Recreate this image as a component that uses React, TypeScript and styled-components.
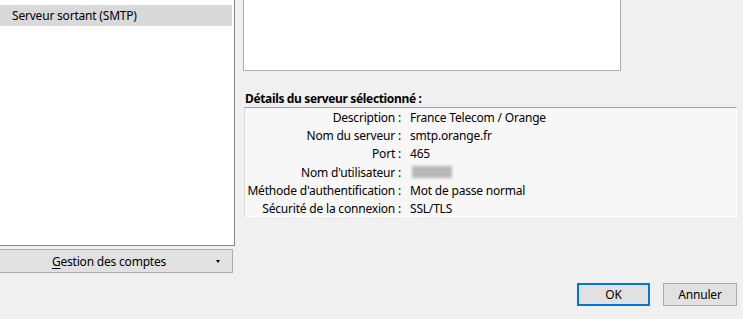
import React from "react";
import styled, { createGlobalStyle } from "styled-components";

const Global = createGlobalStyle`
  html, body { margin: 0; padding: 0; background: #f0f0f0; }
  body { font-family: "Noto Sans", "Open Sans", sans-serif; font-size: 12px; color: #000; letter-spacing: -0.2px; }
`;

const Window = styled.div`
  width: 743px;
  height: 319px;
  background: #f0f0f0;
  overflow: hidden;
  display: flex;
  flex-direction: column;
`;

const Main = styled.div`
  display: flex;
  align-items: flex-start;
`;

const LeftCol = styled.div`
  width: 235px;
  display: flex;
  flex-direction: column;
  gap: 3px;
`;

const List = styled.div`
  height: 246px;
  box-sizing: border-box;
  background: #fff;
  border-right: 1px solid #828790;
  border-bottom: 1px solid #828790;
  padding-top: 5px;
`;

const ListItem = styled.div<{ $selected?: boolean }>`
  height: 21px;
  width: 232px;
  line-height: 21px;
  padding-left: 12px;
  box-sizing: border-box;
  background: ${(p) => (p.$selected ? "#d9d9d9" : "transparent")};
  white-space: nowrap;
`;

const DropButton = styled.div`
  width: 233px;
  height: 24px;
  box-sizing: border-box;
  background: #e1e1e1;
  border: 1px solid #adadad;
  border-left: none;
  display: flex;
  align-items: center;
  position: relative;
  justify-content: center;
  padding-right: 14px;
`;

const Underline = styled.span`
  text-decoration: underline;
  text-underline-offset: 2px;
`;

const Arrow = styled.span`
  position: absolute;
  right: 12px;
  top: 10px;
  width: 0;
  height: 0;
  border-left: 2.5px solid transparent;
  border-right: 2.5px solid transparent;
  border-top: 3px solid #000;
`;

const RightCol = styled.div`
  margin-left: 8px;
  display: flex;
  flex-direction: column;
  width: 494px;
`;

const TopBox = styled.div`
  width: 378px;
  height: 71px;
  box-sizing: border-box;
  background: #fff;
  border: 1px solid #adadad;
  border-top: none;
`;

const Heading = styled.div`
  font-weight: 700;
  letter-spacing: -0.35px;
  margin: 19px 0 0 2px;
  line-height: 17px;
  white-space: nowrap;
`;

const Details = styled.div`
  margin-left: 1px;
  width: 493px;
  height: 110px;
  box-sizing: border-box;
  background: #f7f7f7;
  border-top: 1px solid #a0a0a0;
  border-left: 1px solid #d8d8d8;
  border-right: 1px solid #ffffff;
  border-bottom: 1px solid #ffffff;
  display: grid;
  grid-template-columns: 156px 1fr;
  grid-auto-rows: 18.3px;
  column-gap: 9px;
  align-items: center;
`;

const Label = styled.div`
  text-align: right;
  white-space: nowrap;
`;

const Value = styled.div`
  white-space: nowrap;
`;

const Blur = styled.div`
  width: 40px;
  height: 12px;
  background: #b8b8b8;
  filter: blur(1.5px);
  margin-left: 2px;
`;

const Footer = styled.div`
  margin-top: 10px;
  display: flex;
  justify-content: flex-end;
  gap: 13px;
  padding-right: 6px;
`;

const Button = styled.div<{ $default?: boolean }>`
  width: ${(p) => (p.$default ? "73px" : "74px")};
  height: 23px;
  box-sizing: border-box;
  background: #e1e1e1;
  border: ${(p) => (p.$default ? "2px solid #0078d7" : "1px solid #adadad")};
  display: flex;
  align-items: center;
  justify-content: center;
`;

const rows: [string, string | null][] = [
  ["Description :", "France Telecom / Orange"],
  ["Nom du serveur :", "smtp.orange.fr"],
  ["Port :", "465"],
  ["Nom d'utilisateur :", null],
  ["Méthode d'authentification :", "Mot de passe normal"],
  ["Sécurité de la connexion :", "SSL/TLS"],
];

export default function App() {
  return (
    <Window>
      <Global />
      <Main>
        <LeftCol>
          <List>
            <ListItem $selected>Serveur sortant (SMTP)</ListItem>
          </List>
          <DropButton>
            <span>
              <Underline>G</Underline>estion des comptes
            </span>
            <Arrow />
          </DropButton>
        </LeftCol>
        <RightCol>
          <TopBox />
          <Heading>Détails du serveur sélectionné :</Heading>
          <Details>
            {rows.map(([l, v]) => (
              <React.Fragment key={l}>
                <Label>{l}</Label>
                {v === null ? <Blur /> : <Value>{v}</Value>}
              </React.Fragment>
            ))}
          </Details>
        </RightCol>
      </Main>
      <Footer>
        <Button $default>OK</Button>
        <Button>Annuler</Button>
      </Footer>
    </Window>
  );
}
